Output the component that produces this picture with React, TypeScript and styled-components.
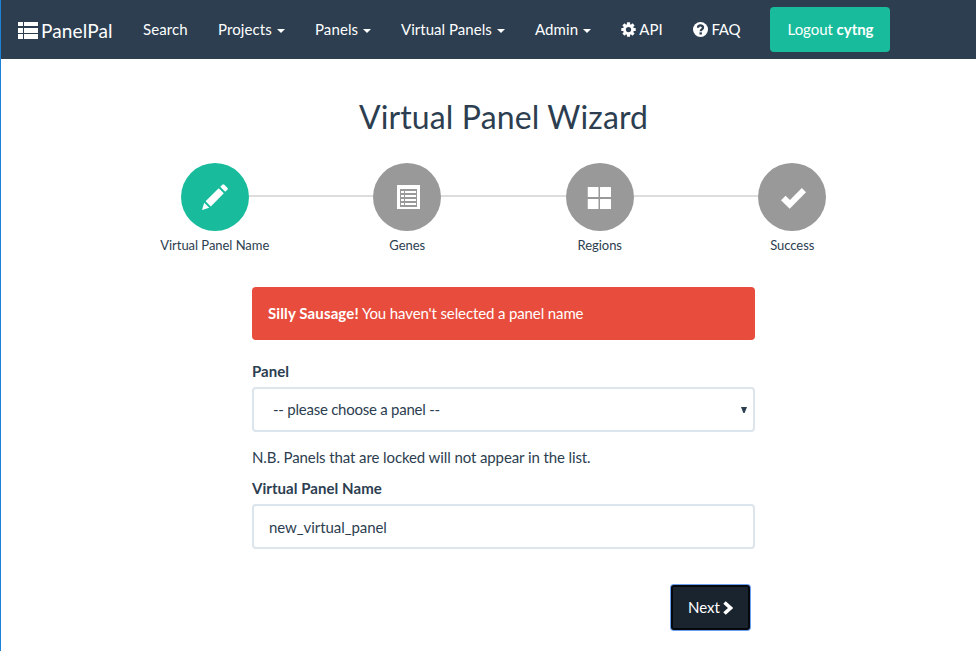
import React from "react";
import styled, { createGlobalStyle } from "styled-components";

const GlobalStyle = createGlobalStyle`
  *, *::before, *::after { box-sizing: border-box; }
  body {
    margin: 0;
    background: #fff;
    color: #2c3e50;
    font: 400 15px/21px Lato, "Liberation Sans", sans-serif;
  }
`;

const Page = styled.div`
  min-height: 651px;
  border-left: 1px solid #1c82d8;
  overflow: hidden;
`;

const Navbar = styled.nav`
  display: flex;
  align-items: center;
  height: 59px;
  padding-left: 17px;
  background: #2c3e50;
  color: #fff;
  white-space: nowrap;
`;

const Brand = styled.div`
  display: flex;
  align-items: center;
  gap: 3px;
  width: 110px;
  padding-top: 2px;
  font-size: 19px;
  line-height: 21px;
  letter-spacing: 0.15px;
`;

const NavItem = styled.div<{ $width: number; $spacing?: number }>`
  display: flex;
  align-items: center;
  width: ${(p) => p.$width}px;
  padding-left: 15px;
  letter-spacing: ${(p) => p.$spacing ?? 0.1}px;
`;

const Caret = styled.span`
  margin: 2px 0 0 5px;
  border: 4px solid transparent;
  border-top-color: #fff;
  border-bottom: 0;
`;

const Logout = styled.button`
  width: 120px;
  height: 45px;
  margin-left: 14px;
  padding: 0 0 0 1px;
  border: 0;
  border-radius: 4px;
  background: #18bc9c;
  color: #fff;
  font: inherit;
  letter-spacing: -0.05px;
`;

const Title = styled.h2`
  margin: 37px 0 0 30px;
  text-align: center;
  font-size: 32px;
  line-height: 42px;
  font-weight: 400;
  letter-spacing: 0.13px;
`;

const Steps = styled.div`
  display: grid;
  grid-template-columns: repeat(4, 192.5px);
  margin: 25px 0 0 117.5px;
`;

const Step = styled.div`
  text-align: center;
  font-size: 13px;
  line-height: 18px;
  letter-spacing: -0.04px;
`;

const Track = styled.div`
  display: flex;
  align-items: center;
  margin-bottom: 5px;
`;

const Line = styled.span<{ $hidden?: boolean }>`
  flex: 1;
  height: 2px;
  margin-bottom: 2px;
  background: ${(p) => (p.$hidden ? "transparent" : "#ddd")};
`;

const Circle = styled.span<{ $active?: boolean }>`
  display: flex;
  align-items: center;
  justify-content: center;
  width: 68px;
  height: 68px;
  border-radius: 50%;
  background: ${(p) => (p.$active ? "#18bc9c" : "#999")};
`;

const Form = styled.main`
  width: 503px;
  margin: 33px 0 0 251px;
`;

const Alert = styled.div`
  height: 53px;
  padding: 16px;
  margin-bottom: 21px;
  border-radius: 4px;
  background: #e74c3c;
  color: #fff;
  letter-spacing: -0.12px;

  b { letter-spacing: 0.12px; }
`;

const Label = styled.label`
  display: block;
  margin-bottom: 5px;
  font-weight: 700;
  letter-spacing: 0.05px;
`;

const Field = styled.div<{ $indent: number; $spacing: number; $drop?: number }>`
  display: flex;
  align-items: center;
  justify-content: space-between;
  height: 45px;
  padding: ${(p) => p.$drop ?? 0}px 6px 0 ${(p) => p.$indent}px;
  border: 2px solid #dce4ec;
  border-radius: 4px;
  letter-spacing: ${(p) => p.$spacing}px;
`;

const Note = styled.p`
  margin: 15px 0 10px;
  letter-spacing: -0.1px;
`;

const Next = styled.button`
  display: flex;
  align-items: center;
  gap: 3px;
  width: 79px;
  height: 45px;
  margin: 36px 5px 0 auto;
  padding: 0 0 0 15px;
  border: 2px solid #05080d;
  border-radius: 3px;
  box-shadow: 0 0 0 1px #6b9ff0;
  background: #1a242f;
  color: #fff;
  font: inherit;
`;

const BrandIcon = () => (
  <svg width="20" height="17" viewBox="0 0 20 17" fill="#fff">
    <path d="M0 0h5v4H0zM6 0h14v4H6zM0 6h5v5H0zM6 6h14v5H6zM0 12h5v5H0zM6 12h14v5H6z" />
  </svg>
);

const CogIcon = () => (
  <svg width="15" height="15" viewBox="0 0 16 16">
    <g fill="#fff">
      {[0, 45, 90, 135].map((a) => (
        <rect key={a} x="6.3" y="0.3" width="3.4" height="15.4" rx=".5" transform={`rotate(${a} 8 8)`} />
      ))}
      <circle cx="8" cy="8" r="5.8" />
    </g>
    <circle cx="8" cy="8" r="2.8" fill="#2c3e50" />
  </svg>
);

const HelpIcon = () => (
  <svg width="15" height="15" viewBox="0 0 15 15">
    <circle cx="7.5" cy="7.5" r="7.5" fill="#fff" />
    <path d="M5 5.8C5 2.7 10 2.7 10 5.6 10 7.5 7.7 7.2 7.7 9.2" fill="none" stroke="#2c3e50" strokeWidth="2.3" />
    <path d="M6.5 10.3h2.4v2.2H6.5z" fill="#2c3e50" />
  </svg>
);

const PencilIcon = () => (
  <svg width="26" height="26" viewBox="0 0 26 26" fill="#fff">
    <path d="M0 26l2.2-7.2 5 5zM3.6 17.2L16.7 4.2l5.1 5.1L8.8 22.4zM18.2 2.8l2.1-2.1q1-1 2 0l3 3q1 1 0 2l-2.1 2.1z" />
  </svg>
);

const ListIcon = () => (
  <svg width="23" height="24" viewBox="0 0 23 24">
    <path d="M0 0h23v24H0z" fill="#fff" />
    <path d="M3 4h17v18H3z" fill="#999" />
    <path d="M4 6h3v2H4zM8 6h11v2H8zM4 10h3v2H4zM8 10h11v2H8zM4 14h3v2H4zM8 14h11v2H8zM4 18h3v2H4zM8 18h11v2H8z" fill="#fff" />
  </svg>
);

const GridIcon = () => (
  <svg width="24" height="22" viewBox="0 0 24 22" fill="#fff">
    <rect width="11" height="10" rx=".6" />
    <rect x="12.5" width="11" height="10" rx=".6" />
    <rect y="12" width="11" height="10" rx=".6" />
    <rect x="12.5" y="12" width="11" height="10" rx=".6" />
  </svg>
);

const CheckIcon = () => (
  <svg width="25" height="21" viewBox="0 0 25 21" fill="#fff">
    <path d="M0 12.3L4.6 7.8 9 12.1 20.8 0 25 4.3 8.7 20.7z" />
  </svg>
);

const IconOffset = styled.span<{ $x: number; $y: number }>`
  display: flex;
  transform: translate(${(p) => p.$x}px, ${(p) => p.$y}px);
`;

const steps = [
  { label: "Virtual Panel Name", icon: <PencilIcon />, x: 0, y: 0 },
  { label: "Genes", icon: <ListIcon />, x: 1, y: 0 },
  { label: "Regions", icon: <GridIcon />, x: -0.5, y: 1 },
  { label: "Success", icon: <CheckIcon />, x: 1, y: 1 },
];

const menus = [
  { label: "Projects", width: 97, spacing: 0.1 },
  { label: "Panels", width: 86, spacing: 0.1 },
  { label: "Virtual Panels", width: 134, spacing: 0.03 },
  { label: "Admin", width: 86, spacing: 0.1 },
];

export default function App() {
  return (
    <Page>
      <GlobalStyle />
      <Navbar>
        <Brand><BrandIcon /><span>PanelPal</span></Brand>
        <NavItem $width={75}>Search</NavItem>
        {menus.map((m) => (
          <NavItem key={m.label} $width={m.width} $spacing={m.spacing}>{m.label}<Caret /></NavItem>
        ))}
        <NavItem $width={72} $spacing={0}><CogIcon /><span>&nbsp;API</span></NavItem>
        <NavItem $width={78} $spacing={-0.3}><HelpIcon /><span>&nbsp;FAQ</span></NavItem>
        <Logout>Logout <b>cytng</b></Logout>
      </Navbar>
      <Title>Virtual Panel Wizard</Title>
      <Steps>
        {steps.map((s, i) => (
          <Step key={s.label}>
            <Track>
              <Line $hidden={i === 0} />
              <Circle $active={i === 0}>
                <IconOffset $x={s.x} $y={s.y}>{s.icon}</IconOffset>
              </Circle>
              <Line $hidden={i === steps.length - 1} />
            </Track>
            {s.label}
          </Step>
        ))}
      </Steps>
      <Form>
        <Alert><b>Silly Sausage!</b> You haven't selected a panel name</Alert>
        <Label>Panel</Label>
        <Field $indent={19} $spacing={-0.24}>
          <span>-- please choose a panel --</span>
          <svg width="6" height="6" viewBox="0 0 6 6"><path d="M0 0h6L3.6 6H2.4z" fill="#2c3e50" /></svg>
        </Field>
        <Note>N.B. Panels that are locked will not appear in the list.</Note>
        <Label>Virtual Panel Name</Label>
        <Field $indent={15} $spacing={-0.07} $drop={2}>new_virtual_panel</Field>
        <Next>
          Next
          <svg width="10" height="14" viewBox="0 0 10 14"><path d="M1.5 1.5L7.5 7l-6 5.5" fill="none" stroke="#fff" strokeWidth="3.6" /></svg>
        </Next>
      </Form>
    </Page>
  );
}
